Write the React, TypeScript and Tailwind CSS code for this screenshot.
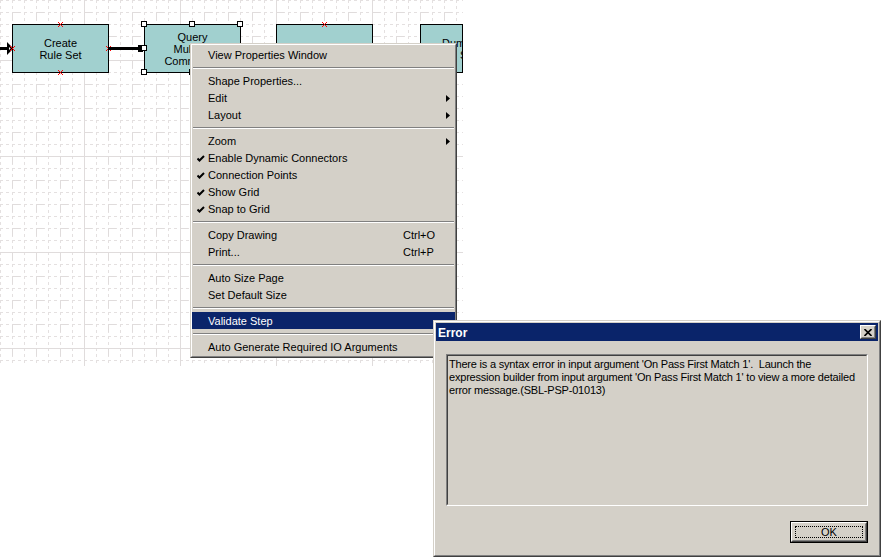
import React from "react";

const ui = "font-['Liberation_Sans',Arial,sans-serif] text-[11px]";

function RedX({ x, y }: { x: number; y: number }) {
  return (
    <svg className="absolute" style={{ left: x - 2, top: y - 2 }} width="5" height="5" viewBox="0 0 5 5">
      <path d="M0 0L5 5M5 0L0 5" stroke="#ff0000" strokeWidth="1.2" shapeRendering="crispEdges" />
    </svg>
  );
}

function Handle({ x, y }: { x: number; y: number }) {
  return <div className="absolute h-[6px] w-[6px] border border-black bg-white" style={{ left: x - 3, top: y - 3 }} />;
}

function Shape({ left, lines, w = 97 }: { left: number; lines: string[]; w?: number }) {
  return (
    <div
      className="absolute top-[24px] flex h-[49px] flex-col items-center justify-center overflow-hidden border border-black bg-[#a1d0cf] leading-[12px] text-black"
      style={{ left, width: w }}
    >
      {lines.map((l) => (
        <span key={l} className="whitespace-nowrap">{l}</span>
      ))}
    </div>
  );
}

function GridCanvas() {
  return (
    <svg className="absolute inset-0" width="463" height="366">
      <defs>
        <pattern id="minor" width="12" height="12" patternUnits="userSpaceOnUse">
          <path d="M0 0.5H12M0.5 0V12" stroke="#e4e0e0" strokeDasharray="3 3" />
        </pattern>
        <pattern id="mid" width="24" height="24" patternUnits="userSpaceOnUse">
          <path d="M12.5 20V12.5H20" stroke="#e0dcdc" fill="none" />
        </pattern>
        <pattern id="major" x="84" y="60" width="96" height="96" patternUnits="userSpaceOnUse">
          <path d="M0.5 0V96M0 0.5H96" stroke="#e0dcdc" />
        </pattern>
      </defs>
      <rect width="463" height="366" fill="#fff" />
      <rect width="463" height="366" fill="url(#minor)" />
      <rect width="463" height="366" fill="url(#mid)" />
      <rect width="463" height="366" fill="url(#major)" />
    </svg>
  );
}

function Check() {
  return (
    <svg className="absolute left-[5px] top-[6px]" width="8" height="7" viewBox="0 0 8 7">
      <path d="M0.5 3.5L2.5 5.5L7 1" stroke="#000" strokeWidth="2" fill="none" />
    </svg>
  );
}

type Item = { label: string; checked?: boolean; sub?: boolean; shortcut?: string; active?: boolean };

function MenuItem({ label, checked, sub, shortcut, active }: Item) {
  return (
    <div className={`relative h-[17px] pl-[16px] pt-[1px] leading-[17px] ${active ? "bg-[#0a246a] text-white" : "text-black"}`}>
      {checked && <Check />}
      <span className="whitespace-nowrap">{label}</span>
      {shortcut && <span className="absolute left-[211px] top-[1px]">{shortcut}</span>}
      {sub && (
        <svg className="absolute left-[254px] top-[6px]" width="4" height="7" viewBox="0 0 4 7">
          <path d="M0 0L4 3.5L0 7Z" fill="#000" />
        </svg>
      )}
    </div>
  );
}

function Sep() {
  return (
    <div className="h-[9px] px-[1px] pt-[4px]">
      <div className="h-[2px] border-t border-b border-t-[#808080] border-b-white" />
    </div>
  );
}

const groups: Item[][] = [
  [{ label: "View Properties Window" }],
  [{ label: "Shape Properties..." }, { label: "Edit", sub: true }, { label: "Layout", sub: true }],
  [
    { label: "Zoom", sub: true },
    { label: "Enable Dynamic Connectors", checked: true },
    { label: "Connection Points", checked: true },
    { label: "Show Grid", checked: true },
    { label: "Snap to Grid", checked: true },
  ],
  [
    { label: "Copy Drawing", shortcut: "Ctrl+O" },
    { label: "Print...", shortcut: "Ctrl+P" },
  ],
  [{ label: "Auto Size Page" }, { label: "Set Default Size" }],
  [{ label: "Validate Step", active: true }],
  [{ label: "Auto Generate Required IO Arguments" }],
];

function ContextMenu() {
  return (
    <div className="absolute left-[190px] top-[43px] w-[267px] border border-t-[#d4d0c8] border-l-[#d4d0c8] border-r-[#404040] border-b-[#404040]">
      <div className="border border-t-white border-l-white border-r-[#808080] border-b-[#808080] bg-[#d4d0c8] py-[1px]">
        {groups.map((g, i) => (
          <div key={i}>
            {i > 0 && <Sep />}
            {g.map((it) => (
              <MenuItem key={it.label} {...it} />
            ))}
          </div>
        ))}
      </div>
    </div>
  );
}

function ErrorDialog() {
  return (
    <div className="absolute left-[433px] top-[320px] h-[237px] w-[448px] border border-t-[#d4d0c8] border-l-[#d4d0c8] border-r-[#404040] border-b-[#404040]">
      <div className="flex h-full flex-col border border-t-white border-l-white border-r-[#808080] border-b-[#808080] bg-[#d4d0c8] p-[1px]">
        <div className="flex h-[18px] items-center justify-between bg-[#0a246a] pl-[2px] pr-[2px]">
          <span className="pt-[1px] text-[12px] font-bold text-white">Error</span>
          <div className="border border-t-white border-l-white border-r-[#404040] border-b-[#404040]">
            <div className="flex h-[12px] w-[14px] items-center justify-center border border-t-[#d4d0c8] border-l-[#d4d0c8] border-r-[#808080] border-b-[#808080] bg-[#d4d0c8]">
              <svg width="8" height="7" viewBox="0 0 8 7">
                <path d="M0.5 0L7.5 7M7.5 0L0.5 7" stroke="#000" strokeWidth="1.6" />
              </svg>
            </div>
          </div>
        </div>
        <div className="flex flex-1 flex-col px-[10px] pt-[13px]">
          <div className="h-[152px] border border-t-[#808080] border-l-[#808080] border-r-white border-b-white">
            <div className="h-full border border-t-[#404040] border-l-[#404040] border-r-[#d4d0c8] border-b-[#d4d0c8] px-[1px] pt-[2px] leading-[13px] tracking-[-0.2px] text-black">
              <p className="whitespace-nowrap">
                There is a syntax error in input argument 'On Pass First Match 1'.&nbsp; Launch the
                <br />
                expression builder from input argument 'On Pass First Match 1' to view a more detailed
                <br />
                error message.(SBL-PSP-01013)
              </p>
            </div>
          </div>
          <div className="mt-[15px] flex justify-end">
            <div className="border border-black">
              <div className="border border-t-white border-l-white border-r-[#404040] border-b-[#404040]">
                <div className="flex h-[18px] w-[74px] items-center justify-center border border-t-[#d4d0c8] border-l-[#d4d0c8] border-r-[#808080] border-b-[#808080] bg-[#d4d0c8] p-[2px]">
                  <div className="flex h-full w-full items-center justify-center border border-dotted border-black text-black">
                    OK
                  </div>
                </div>
              </div>
            </div>
          </div>
        </div>
      </div>
    </div>
  );
}

export default function App() {
  return (
    <div className={`relative h-[558px] w-[881px] overflow-hidden bg-white ${ui}`}>
      <div className="relative h-[366px] w-[463px] overflow-hidden">
        <GridCanvas />
        {/* incoming connector */}
        <svg className="absolute left-0 top-[42px]" width="14" height="13" viewBox="0 0 14 13">
          <path d="M0 6.5H8" stroke="#000" strokeWidth="3" />
          <path d="M8 2.5L12 6.5L8 10.5Z" stroke="#000" strokeWidth="2" fill="#fff" />
        </svg>
        <Shape left={12} lines={["Create", "Rule Set"]} />
        <RedX x={60} y={24} />
        <RedX x={60} y={72} />
        <RedX x={12} y={48} />
        <RedX x={108} y={48} />
        {/* connector to step 2 */}
        <div className="absolute left-[108px] top-[47px] h-[3px] w-[32px] bg-black" />
        <div className="absolute left-[138px] top-[45px] h-[7px] w-[5px] bg-black" />
        <Shape left={144} lines={["Query", "Multiple", "Commands"]} />
        <Handle x={144} y={24} />
        <Handle x={192} y={24} />
        <Handle x={240} y={24} />
        <Handle x={144} y={48} />
        <Handle x={240} y={48} />
        <Handle x={144} y={72} />
        <Handle x={192} y={72} />
        <Handle x={240} y={72} />
        <Shape left={276} lines={["Lookup Rules"]} />
        <RedX x={324} y={24} />
        <div className="absolute left-[420px] top-[24px] h-[49px] w-[43px] overflow-hidden border border-black bg-[#a1d0cf] leading-[12px] text-black">
          <span className="absolute left-[21px] top-[12px] whitespace-nowrap">Dummy</span>
          <span className="absolute left-[39px] top-[24px] whitespace-nowrap">Step</span>
        </div>
      </div>
      <ContextMenu />
      <ErrorDialog />
    </div>
  );
}
